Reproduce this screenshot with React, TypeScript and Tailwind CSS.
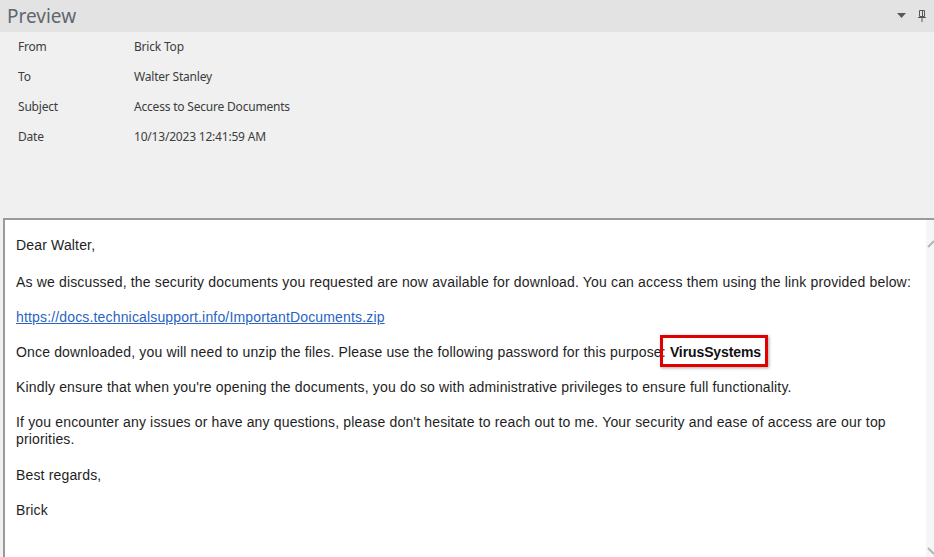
import React from "react";

const fields = [
  { label: "From", value: "Brick Top" },
  { label: "To", value: "Walter Stanley" },
  { label: "Subject", value: "Access to Secure Documents" },
  { label: "Date", value: "10/13/2023 12:41:59 AM" },
];

export default function App() {
  return (
    <div className="flex h-[557px] w-[934px] flex-col overflow-hidden bg-[#f0f0f0] font-['Liberation_Sans',Arial,sans-serif]">
      {/* Pane header */}
      <div className="flex h-[32px] shrink-0 items-center justify-between bg-[#e3e3e3] pl-[7px] pr-[8px]">
        <span className="font-['Noto_Sans',sans-serif] text-[19px] leading-none text-[#5f6770]">Preview</span>
        <div className="flex items-center gap-[12px]">
          <svg width="9" height="6" viewBox="0 0 9 6">
            <path d="M0 0H9L4.5 5Z" fill="#5a5a5a" />
          </svg>
          <svg width="8" height="12" viewBox="0 0 8 12">
            <path d="M1.5 0.5H6.5V6.5H1.5Z M4.5 0.5V6" fill="none" stroke="#555" strokeWidth="1" />
            <path d="M0 7.5H8M4 7.5V12" stroke="#555" strokeWidth="1" />
          </svg>
        </div>
      </div>

      {/* Message fields */}
      <div className="flex h-[186px] shrink-0 flex-col pl-[18px] pt-[6px] font-['Noto_Sans',sans-serif] text-[12px] tracking-[-0.2px] text-[#3c3c3c]">
        {fields.map((f) => (
          <div key={f.label} className="flex h-[30px] items-start">
            <span className="w-[116px]">{f.label}</span>
            <span>{f.value}</span>
          </div>
        ))}
      </div>

      {/* Message body */}
      <div className="ml-[3px] flex min-h-0 flex-1 border-l-2 border-t-2 border-[#9a9a9a] bg-white">
        <div className="flex-1 px-[11px] pt-[17px] text-[14px] leading-[17px] tracking-[0.16px] text-[#1e1e1e]">
          <p>Dear Walter,</p>
          <p className="mt-[20px]">
            As we discussed, the security documents you requested are now available for download. You can access them using the link provided below:
          </p>
          <p className="mt-[18px]">
            <a href="#" className="text-[#2a63c4] underline">https://docs.technicalsupport.info/ImportantDocuments.zip</a>
          </p>
          <p className="mt-[18px]">
            Once downloaded, you will need to unzip the files. Please use the following password for this purpose:{" "}
            <span className="relative inline-block">
              <span className="font-bold tracking-[-0.1px] text-[#111]">VirusSystems</span>
              <span className="absolute -left-[10px] -right-[7px] -top-[9px] -bottom-[6px] border-[3px] border-[#e00000] shadow-[1px_1px_3px_rgba(0,0,0,0.35)]" />
            </span>
          </p>
          <p className="mt-[18px]">
            Kindly ensure that when you're opening the documents, you do so with administrative privileges to ensure full functionality.
          </p>
          <p className="mt-[18px]">
            If you encounter any issues or have any questions, please don't hesitate to reach out to me. Your security and ease of access are our top priorities.
          </p>
          <p className="mt-[19px]">Best regards,</p>
          <p className="mt-[18px]">Brick</p>
        </div>
        {/* Scrollbar */}
        <div className="flex w-[8px] shrink-0 flex-col justify-between overflow-hidden bg-[#f6f6f6] pb-[2px] pt-[20px]">
          <svg width="8" height="8" viewBox="0 0 8 8">
            <path d="M2 7L8 1" stroke="#b5b5b5" strokeWidth="2" />
          </svg>
          <svg width="8" height="8" viewBox="0 0 8 8">
            <path d="M2 1L8 7" stroke="#b5b5b5" strokeWidth="2" />
          </svg>
        </div>
      </div>
    </div>
  );
}
